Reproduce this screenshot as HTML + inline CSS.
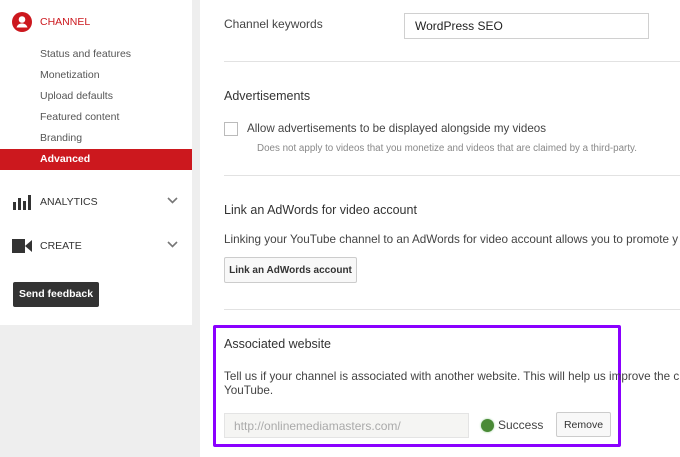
<!DOCTYPE html>
<html><head><style>
*{margin:0;padding:0;box-sizing:border-box}
body{width:680px;height:457px;overflow:hidden;background:#eee;font-family:"Liberation Sans",Arial,sans-serif;position:relative;color:#333}
.abs{position:absolute;white-space:nowrap}
#side{position:absolute;left:0;top:0;width:192px;height:325px;background:#fff}
#main{position:absolute;left:200px;top:0;width:480px;height:457px;background:#fff}
.sub{position:absolute;left:40px;font-size:10.5px;color:#555}
.hr{position:absolute;left:224px;width:456px;height:1px;background:#e2e2e2}
.btn{position:absolute;border:1px solid #ccc;background:#f8f8f8;font-size:10px;font-weight:bold;color:#333;border-radius:2px;white-space:nowrap;display:flex;align-items:center;justify-content:center}
</style></head><body>
<div id="side">
<svg class="abs" style="left:12px;top:12px" width="20" height="20" viewBox="0 0 20 20"><circle cx="10" cy="10" r="10" fill="#cc181e"/><circle cx="10" cy="7.5" r="3.3" fill="#fff"/><path d="M4.5 15.5c1-3 3-4 5.5-4s4.5 1 5.5 4z" fill="#fff"/></svg>
<div class="abs" style="left:40px;top:16px;font-size:10.5px;color:#cc181e">CHANNEL</div>
<div class="sub" style="top:48px">Status and features</div>
<div class="sub" style="top:69px">Monetization</div>
<div class="sub" style="top:90px">Upload defaults</div>
<div class="sub" style="top:111px">Featured content</div>
<div class="sub" style="top:132px">Branding</div>
<div class="abs" style="left:0;top:149px;width:192px;height:21px;background:#cc181e"></div>
<div class="abs" style="left:40px;top:153px;font-size:10.5px;color:#fff;font-weight:bold">Advanced</div>
<svg class="abs" style="left:13px;top:194px" width="18" height="16" viewBox="0 0 18 16"><rect x="0" y="8" width="3" height="8" fill="#333"/><rect x="5" y="4" width="3" height="12" fill="#333"/><rect x="10" y="7" width="3" height="9" fill="#333"/><rect x="15" y="1" width="3" height="15" fill="#333"/></svg>
<div class="abs" style="left:40px;top:196px;font-size:10.5px;color:#333">ANALYTICS</div>
<svg class="abs" style="left:167px;top:197px" width="11" height="7" viewBox="0 0 11 7"><path d="M1 1l4.5 4.5L10 1" stroke="#777" stroke-width="1.6" fill="none"/></svg>
<svg class="abs" style="left:12px;top:238px" width="20" height="16" viewBox="0 0 20 16"><rect x="0" y="1" width="13" height="14" fill="#333"/><path d="M13 8l7-6v12z" fill="#333"/></svg>
<div class="abs" style="left:40px;top:240px;font-size:10.5px;color:#333">CREATE</div>
<svg class="abs" style="left:167px;top:241px" width="11" height="7" viewBox="0 0 11 7"><path d="M1 1l4.5 4.5L10 1" stroke="#777" stroke-width="1.6" fill="none"/></svg>
<div class="abs" style="left:13px;top:282px;width:86px;height:25px;background:#333;border-radius:2px;color:#fff;font-size:10.5px;font-weight:bold;line-height:25px;text-align:center">Send feedback</div>
</div>
<div id="main"></div>
<div class="abs" style="left:224px;top:17px;font-size:12px;color:#444">Channel keywords</div>
<div class="abs" style="left:404px;top:13px;width:245px;height:26px;border:1px solid #d0d0d0;font-size:12px;padding:5px 10px;color:#222">WordPress SEO</div>
<div class="hr" style="top:61px"></div>
<div class="abs" style="left:224px;top:89px;font-size:12.5px;color:#333">Advertisements</div>
<div class="abs" style="left:224px;top:122px;width:14px;height:14px;border:1px solid #bbb"></div>
<div class="abs" style="left:247px;top:122px;font-size:11.6px;color:#444">Allow advertisements to be displayed alongside my videos</div>
<div class="abs" style="left:257px;top:143px;font-size:9.8px;color:#888">Does not apply to videos that you monetize and videos that are claimed by a third-party.</div>
<div class="hr" style="top:175px"></div>
<div class="abs" style="left:224px;top:203px;font-size:12.5px;color:#333">Link an AdWords for video account</div>
<div class="abs" style="left:224px;top:233px;font-size:11.7px;color:#444">Linking your YouTube channel to an AdWords for video account allows you to promote y</div>
<div class="btn" style="left:224px;top:257px;width:133px;height:26px">Link an AdWords account</div>
<div class="hr" style="top:309px"></div>
<div class="abs" style="left:213px;top:325px;width:408px;height:122px;border:3px solid #8a00ff;border-radius:2px"></div>
<div class="abs" style="left:224px;top:337px;font-size:12.5px;color:#333">Associated website</div>
<div class="abs" style="left:224px;top:370px;font-size:11.7px;color:#444;line-height:14px">Tell us if your channel is associated with another website. This will help us improve the c<br>YouTube.</div>
<div class="abs" style="left:224px;top:413px;width:245px;height:25px;border:1px solid #e4e4e4;background:#f5f5f3;font-size:12px;color:#aaa;padding:5px 9px">http://onlinemediamasters.com/</div>
<div class="abs" style="left:481px;top:419px;width:13px;height:13px;border-radius:50%;background:#4a8a36;box-shadow:0 0 2px #9c9"></div>
<div class="abs" style="left:498px;top:418px;font-size:12px;color:#444">Success</div>
<div class="btn" style="left:556px;top:412px;width:55px;height:25px;font-weight:normal;font-size:10.5px">Remove</div>
</body></html>
